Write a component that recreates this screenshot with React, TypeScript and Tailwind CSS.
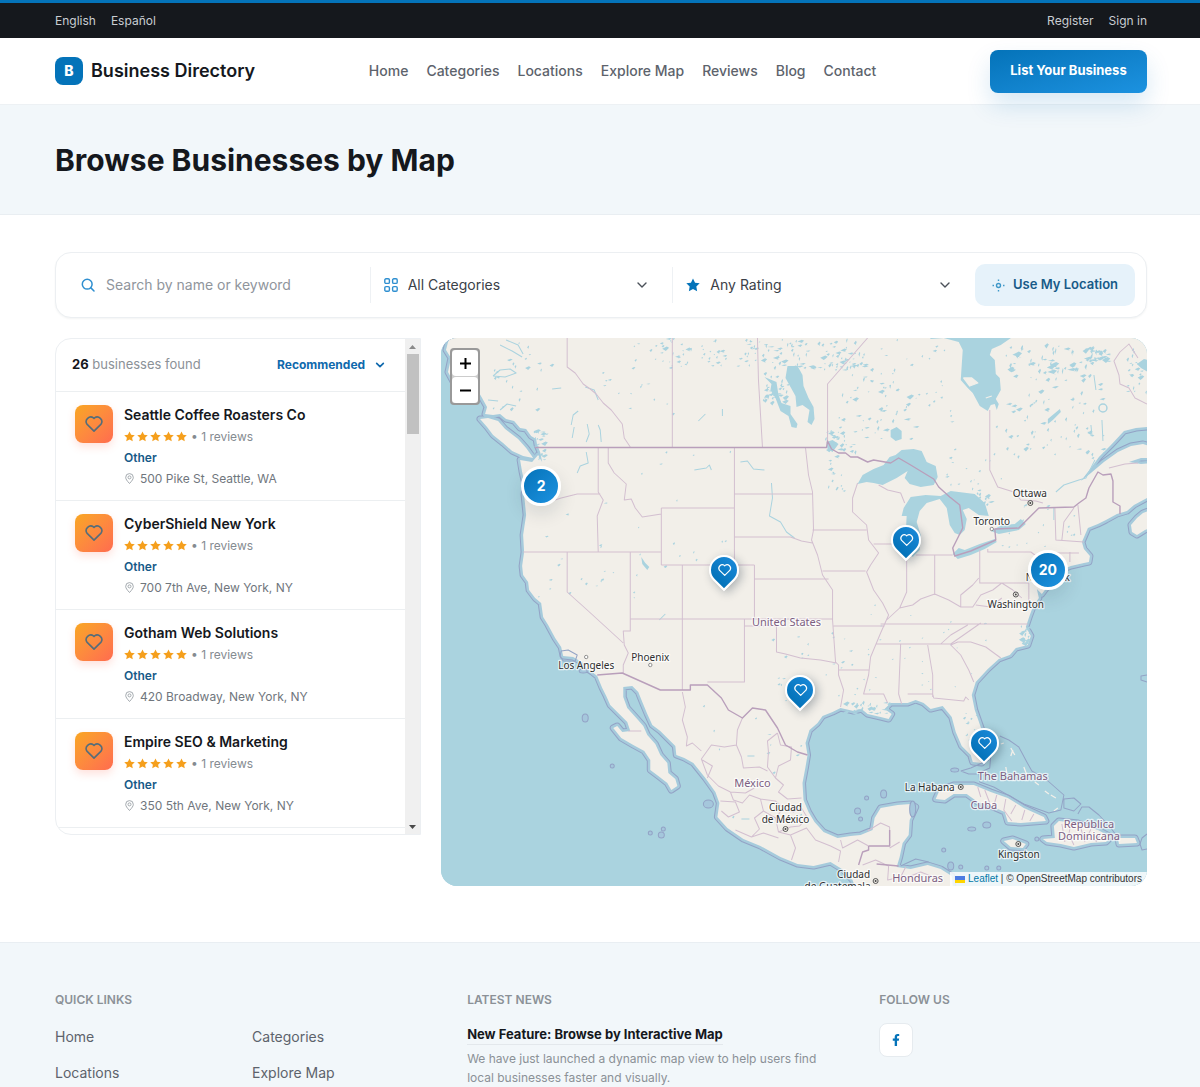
import type { ReactNode } from 'react';
import { FaFacebookF } from 'react-icons/fa';

const NAV = ['Home', 'Categories', 'Locations', 'Explore Map', 'Reviews', 'Blog', 'Contact'];

const BUSINESSES = [
  { name: 'Seattle Coffee Roasters Co', address: '500 Pike St, Seattle, WA' },
  { name: 'CyberShield New York', address: '700 7th Ave, New York, NY' },
  { name: 'Gotham Web Solutions', address: '420 Broadway, New York, NY' },
  { name: 'Empire SEO & Marketing', address: '350 5th Ave, New York, NY' },
];

// Map drawing space
const MAP = { x: 441, y: 338, w: 705, h: 548 };

const LAND =
  'M455 330 L448 342 L446 350 L451 358 L448 372 L455 385 L466 395 L478 391 L482 398 L487 407 L485 414 L493 415 L500 414 L506 419 L514 421 L520 428 L526 429 L531 436 L536 439 L537 445 L540 452 L542 462 L538 455 L532 462 L520 460 L522 472 L525 485 L524 495 L526 515 L523 535 L524 552 L522 566 L523 575 L528 582 L529 590 L535 598 L541 603 L543 617 L548 625 L555 638 L561 647 L563 656 L573 657 L583 663 L586 668 L592 672 L597 676 L602 688 L606 696 L610 705 L617 712 L627 722 L630 731 L622 732 L617 726 L613 728 L621 738 L633 745 L644 751 L650 760 L650 770 L658 776 L667 783 L671 790 L677 786 L675 779 L668 773 L667 763 L660 755 L655 744 L647 735 L643 726 L636 718 L627 708 L623 697 L623 687 L632 686 L638 692 L642 702 L647 714 L652 725 L660 731 L667 738 L675 746 L676 755 L684 758 L693 763 L705 778 L715 792 L719 803 L717 817 L727 828 L743 839 L760 846 L780 857 L797 864 L813 866 L830 862 L843 870 L852 880 L857 895 L953 895 L951 876 L940 869 L927 865 L910 869 L896 867 L899 857 L902 843 L908 835 L909 820 L915 807 L910 804 L897 805 L880 808 L874 818 L872 830 L860 835 L850 836 L837 838 L823 832 L814 822 L808 812 L803 800 L802 783 L805 767 L807 755 L805 743 L809 730 L817 723 L822 716 L832 712 L840 708 L853 711 L861 709 L867 714 L880 717 L888 719 L891 714 L884 709 L890 703 L907 703 L915 700 L923 703 L930 709 L942 706 L951 717 L955 732 L961 746 L970 755 L972 762 L981 763 L985 753 L981 730 L974 710 L971 695 L975 682 L987 669 L998 659 L1009 655 L1015 648 L1027 645 L1030 636 L1025 627 L1029 615 L1032 607 L1038 598 L1036 589 L1041 594 L1047 586 L1050 577 L1055 572 L1070 566 L1083 563 L1088 562 L1089 556 L1083 549 L1081 542 L1084 535 L1087 528 L1097 524 L1105 520 L1116 514 L1126 511 L1133 505 L1146 498 L1155 498 L1155 463 L1140 464 L1128 462 L1140 458 L1155 458 L1155 448 L1142 444 L1130 446 L1117 452 L1103 462 L1090 473 L1080 481 L1090 468 L1098 457 L1110 445 L1123 431 L1135 428 L1155 426 L1155 330 Z';

const ISLANDS = [
  'M480 419 L488 418 L498 421 L505 429 L518 439 L526 448 L531 455 L533 458 L523 456 L512 451 L503 443 L493 435 L487 427 Z',
  'M935 799 L939 790 L953 785 L973 785 L990 792 L1007 798 L1023 808 L1043 817 L1045 821 L1020 823 L1007 822 L1004 812 L990 806 L977 802 L966 794 L953 794 L944 800 Z',
  'M1042 839 L1054 838 L1053 826 L1058 821 L1077 823 L1097 830 L1110 837 L1105 842 L1090 843 L1073 847 L1060 844 L1046 842 Z',
  'M1117 838 L1134 838 L1136 843 L1118 844 Z',
  'M1003 841 L1012 839 L1025 844 L1022 848 L1010 847 Z',
  'M1130 525 L1136 518 L1142 513 L1155 508 L1155 526 L1144 530 L1136 535 L1131 532 Z',
];

const LAKES = [
  'M925 330 L930 339 L943 338 L958 342 L962 350 L961 365 L960 380 L967 388 L972 393 L979 406 L987 411 L990 405 L994 404 L996 410 L998 404 L995 399 L1000 390 L999 378 L995 374 L994 360 L989 355 L991 349 L1000 345 L1013 336 Z',
  'M857 484 L862 475 L873 469 L883 465 L889 457 L895 455 L901 450 L913 449 L921 451 L926 462 L935 466 L937 477 L933 485 L920 487 L909 484 L904 478 L907 471 L896 478 L882 485 L873 483 L866 482 Z',
  'M925 495 L910 497 L903 508 L901 516 L906 516 L905 535 L905 548 L912 557 L919 550 L920 535 L916 522 L919 511 L926 503 L939 499 L946 508 L949 525 L954 533 L959 535 L964 530 L966 519 L962 510 L968 508 L978 515 L988 516 L984 503 L974 494 L950 491 L940 496 Z',
  'M952 554 L958 548 L964 550 L979 544 L994 539 L996 542 L984 549 L970 555 L957 559 Z',
  'M990 531 L1001 525 L1014 524 L1020 519 L1025 524 L1018 530 L998 534 Z',
  'M787 366 L797 366 L802 375 L803 386 L808 398 L813 407 L814 419 L811 425 L807 422 L809 410 L802 405 L796 407 L795 396 L790 387 L785 378 Z',
  'M764 377 L776 382 L778 395 L781 403 L790 406 L790 414 L797 424 L796 428 L791 427 L788 416 L780 411 L775 398 L770 390 L771 384 Z',
  'M890 430 L896 427 L901 431 L901 439 L895 441 L890 437 Z',
  'M1047 419 L1059 409 L1060 412 L1052 420 L1047 424 Z',
  'M641 557 L645 563 L649 567 L647 570 L642 564 Z',
  'M826 442 L832 440 L838 444 L832 452 L827 449 Z',
  'M1136 364 L1143 359 L1147 360 L1147 372 L1140 368 Z',
];

const NATIONAL =
  'M535 447.500 H826 L827 441 L831 449 L838 453 L845 453 L850 457 L857 457 L867 462 L873 460 L890 463 L898 458 L910 465 L933 479 L938 487 L949 497 L959 505 L962 528 L952 548 L954 556 L970 551 L995 540 L994 529 L1018 528 L1038 508 L1073 507 L1078 503 L1085 498 L1088 488 L1097 472 L1102 475 L1110 474 L1112 481 L1112 502 L1119 506 L1119 514 M597 675 L622 673 L660 690 H690 V685 H707 L721 698 L728 710 L742 718 L752 708 L765 710 L777 728 L785 745 L797 752 L807 755 M868 846 H889 V830 M868 846 L868 850 L862 852 L858 865 M876 864 L898 866';

const STATES =
  'M567 338 V367 L575 373 L583 384 L590 389 L596 394 L603 403 L611 410 L622 424 L624 438 L630 447 M672 338 V447 M757 338 L758 380 L762 447 M867 338 L827 384 V441 M989 410 V470 L997 487 L1013 492 L1020 500 L1035 501 L1042 503 M598 448 V492 L603 500 L597 516 L598 552 M555 500 L561 498 L577 494 H600 M523 552 H661 M608 448 V463 L614 473 L626 484 L624 500 L631 499 L635 508 L642 517 L661 514 M661 508 H734 M661 508 V565 M682 565 H754 M661 565 H683 M734 448 V565 M567 552 V592 L587 610 L623 643 M630 552 V631 H623 L624 645 L628 653 L623 665 V673 M630 619 H832 M682 565 V690 M754 565 V619 M744 619 V682 H707 M744 626 H776 V652 L785 654 L800 658 L820 660 L836 663 M754 579 H828 M734 537 H790 L801 541 L812 543 M734 494 H812 M805 448 L808 475 L812 492 L813 530 L811 540 L817 555 L822 575 L832 590 V620 L835 662 L838 665 V675 L843 690 L840 707 M812 530 H866 M822 571 H865 M857 483 L852 498 L852 512 L866 525 L868 540 L878 553 L870 565 L866 572 L873 590 L882 603 L888 615 L880 633 L870 657 L868 675 L863 694 H883 L887 703 M833 626 H884 M838 670 H868 M880 624 H1027 M875 644 H950 M900 644 L898 694 L901 704 M927 645 L932 675 V697 M907 694 H932 L933 698 L963 701 L965 697 L968 700 M950 645 L960 655 L968 670 L973 682 M950 645 L957 642 L970 642 L985 647 L1000 658 M940 644 L950 635 L967 625 M873 544 H905 M906 560 V592 L899 608 M915 555 H952 M934 555 V595 M886 620 L899 608 L912 605 L920 599 L934 594 L948 600 L960 607 L960 595 L972 585 L978 578 M979 550 V583 H1028 M960 607 L972 607 L980 595 L992 590 L1001 583 L1012 590 L1021 598 M987 549 V552 H1030 L1038 558 M1028 583 V603 H1036 M1054 508 L1055 540 L1083 542 M1073 508 L1063 522 L1061 540 M1077 505 L1080 535 M1054 553 H1078 M1069 552 V562 M878 485 L887 490 L900 493 L904 503 M1137 358 L1128 344 L1119 352 L1113 361 L1118 375 L1119 384 L1128 388 L1134 398 L1146 404 M1108 468 L1124 464 L1137 463 M628 731 H641 M950 644 L980 623 M975 605 L990 607 L1001 598';

const MEXICO =
  'M682 692 L685 707 L682 720 L687 737 L686 746 L692 743 L701 751 M742 718 L737 730 L736 745 L741 757 L743 768 L759 767 L767 771 M736 745 L724 747 L711 745 L701 759 L707 775 L718 786 L730 792 L745 793 L754 788 M702 760 L712 766 L707 778 M777 733 L767 741 L768 752 L767 767 L775 778 L783 785 L778 792 L787 799 L801 798 M777 733 L780 745 L791 747 L790 760 L778 766 L775 778 M730 792 L733 800 L742 803 L749 795 L760 799 L763 811 L754 818 L759 829 L751 837 L735 830 M720 801 L735 802 L739 812 L728 817 L721 811 M760 799 L775 801 L783 808 L775 818 L763 811 M775 818 L778 832 L790 835 L795 848 L791 860 M790 835 L806 828 L815 840 L830 846 L840 851 L838 862 M783 808 L793 812 L801 808 L807 818 L799 826 L790 827 L778 832 M840 840 L842 848 L857 840 L868 846 M867 831 L880 823 L889 827 V846 M751 837 L763 833 L778 838 M889 848 L899 842 M862 865 L875 860 L888 866 L887 880 L900 877 L905 867 M905 878 L920 872 L935 878';

const ISLAND_BORDERS =
  'M977 787 L980 797 M984 790 L989 803 M996 795 L993 806 M1005 799 L1003 810 L1011 821 M1015 805 L1010 814 M1024 810 L1021 820 M1033 814 L1029 821 M1070 824 L1068 834 L1073 845 M1079 825 L1084 842 M1090 829 L1086 838 L1096 841 M1061 824 L1064 842 M1100 833 L1095 842';

const MARITIME =
  'M999 736 L1008 740 L1018 747 L1026 762 L1031 771 L1046 780 L1063 795 L1060 810 L1048 813 L1023 804 L993 787 L979 782 L978 773 L989 768 L990 755 M960 771 L970 768 L988 760 M960 771 L968 774 L976 774 M1063 799 L1073 798 L1080 804 L1073 811 L1063 808 Z M1077 814 L1081 807 L1088 807 L1098 815 L1110 828 L1115 835 M1146 834 L1141 838 L1139 844 L1141 850 L1146 849 M900 866 L915 859 L928 862 M1146 675 L1140 676 L1140 680 L1146 682 M561 651 L568 650 L577 655 L575 661 L563 661 L560 656 Z';

const ISLETS: [number, number, number, number][] = [
  [585, 718, 3, 4],
  [612, 766, 2, 2],
  [650, 833, 2, 2],
  [663, 829, 2, 2],
  [661, 835, 3, 3],
  [708, 804, 5, 4],
  [866, 798, 2, 2],
  [883, 794, 3, 4],
  [857, 811, 3, 3],
  [860, 819, 2, 2],
  [912, 809, 3, 8],
  [954, 770, 4, 2],
  [971, 829, 4, 2],
  [986, 825, 4, 3],
  [943, 850, 2, 2],
  [950, 866, 3, 4],
  [960, 867, 2, 2],
  [986, 868, 2, 2],
  [998, 868, 2, 2],
  [1036, 839, 2, 2],
  [583, 671, 4, 2],
];

const RIVERS =
  'M493 376 L500 370 L510 369 L516 373 L505 377 L493 376 M500 345 L512 351 L522 357 M506 340 L518 345 L523 354 M571 425 L573 415 L578 411 M572 438 L574 427 M586 442 L589 434 L587 424 M601 442 L600 430 L598 425 M598 400 L594 390 L585 387 M552 389 L561 388 M488 400 L498 401 M500 410 L507 404 L516 406 M586 452 L588 463 L580 466 L577 473 M694 470 L706 468 L709 465 L711 470 M740 462 L747 461 L753 469 L764 470 M771 483 L772 498 L769 516 L780 522 L786 532 L794 538 M698 421 L705 414 M722 409 V416 M1055 492 L1063 485 L1078 480 L1085 478 L1094 460 M665 614 L659 620 M1093 375 L1095 390 M1101 420 L1102 441 M747 756 H754 M741 819 H749 M1090 425 L1091 435 M1053 508 V520';

const BAHAMAS =
  'M1005 767 L1006 773 M1000 744 L1003 743 M1010 748 L1014 755 M1012 750 L1010 756 M1023 767 L1026 775 M1034 782 L1038 785 M1044 791 L1048 794 M1053 811 L1057 808 M1050 795 L1055 798 M963 378 L971 378 L977 383 L969 386 Z M985 398 L991 396';

function scatter(seed: number, count: number, x: number, y: number, w: number, h: number, size: number) {
  let s = seed;
  const next = () => {
    s = (s * 16807) % 2147483647;
    return s / 2147483647;
  };
  let d = '';
  for (let i = 0; i < count; i++) {
    const px = x + next() * w;
    const py = y + next() * h;
    const r = next();
    const a = 1 + r * r * size;
    const b = 0.5 + next() * size * 0.5;
    const lean = (next() - 0.5) * a;
    d += `M${px.toFixed(1)} ${py.toFixed(1)}l${a.toFixed(1)} ${(-b).toFixed(1)}l${(a / 2).toFixed(1)} ${(b / 2).toFixed(1)}l${(-a / 2).toFixed(1)} ${b.toFixed(1)}l${lean.toFixed(1)} ${(b / 2).toFixed(1)}z`;
  }
  return d;
}

const PONDS = [
  scatter(17017, 45, 680, 339, 75, 28, 3),
  scatter(31337, 45, 758, 340, 62, 28, 4),
  scatter(47123, 38, 762, 372, 24, 32, 4),
  scatter(59441, 45, 818, 340, 45, 30, 4),
  scatter(67891, 60, 832, 365, 88, 80, 4),
  scatter(71233, 22, 870, 340, 80, 70, 2),
  scatter(83777, 50, 1004, 345, 90, 28, 6),
  scatter(97531, 75, 1004, 375, 98, 85, 4),
  scatter(10133, 28, 1083, 346, 22, 16, 5),
  scatter(11369, 22, 1125, 350, 20, 45, 4),
  scatter(12791, 24, 600, 340, 75, 80, 2),
  scatter(13147, 14, 660, 339, 18, 30, 4),
  scatter(13901, 24, 490, 342, 60, 70, 3),
  scatter(14939, 22, 532, 430, 12, 30, 4),
  scatter(15107, 24, 824, 430, 30, 24, 4),
  scatter(16363, 14, 825, 456, 18, 38, 3),
  scatter(17321, 22, 530, 500, 110, 100, 2),
  scatter(18127, 24, 770, 630, 95, 70, 2),
  scatter(19183, 30, 860, 600, 130, 90, 1),
  scatter(19319, 22, 940, 400, 60, 90, 2),
  scatter(19937, 22, 1000, 500, 110, 50, 2),
  scatter(21121, 14, 974, 490, 14, 20, 5),
  scatter(22307, 12, 962, 705, 14, 40, 2),
  scatter(22709, 20, 1018, 625, 10, 20, 4),
  scatter(22943, 30, 832, 702, 60, 12, 4),
  scatter(23327, 16, 700, 700, 100, 130, 2),
  scatter(23911, 14, 620, 450, 110, 120, 2),
].join('');

type Place = { lines: string[]; x: number; y: number; country?: boolean };

const PLACES: Place[] = [
  { lines: ['Ottawa'], x: 1029, y: 497 },
  { lines: ['Toronto'], x: 991, y: 525 },
  { lines: ['Washington'], x: 1015, y: 608 },
  { lines: ['New York'], x: 1047, y: 581 },
  { lines: ['Los Angeles'], x: 586, y: 669 },
  { lines: ['Phoenix'], x: 650, y: 661 },
  { lines: ['La Habana'], x: 929, y: 791 },
  { lines: ['Kingston'], x: 1018, y: 858 },
  { lines: ['Ciudad', 'de México'], x: 785, y: 811 },
  { lines: ['Ciudad'], x: 853, y: 878 },
  { lines: ['de Guatemala'], x: 837, y: 890 },
  { lines: ['United States'], x: 786, y: 626, country: true },
  { lines: ['México'], x: 752, y: 787, country: true },
  { lines: ['The Bahamas'], x: 1012, y: 780, country: true },
  { lines: ['Cuba'], x: 983, y: 809, country: true },
  { lines: ['República', 'Dominicana'], x: 1088, y: 828, country: true },
  { lines: ['Honduras'], x: 917, y: 882, country: true },
];

const CAPITALS = [
  [1029.5, 503],
  [1015, 594.5],
  [960, 787],
  [1017.5, 844],
  [785, 829],
  [875, 881],
];

const TOWNS = [
  [586, 657],
  [650, 665],
  [991, 529],
];

function MapDrawing() {
  const coast = [LAND, ...ISLANDS].join(' ');
  return (
    <svg
      className="absolute inset-0 h-full w-full"
      viewBox={`${MAP.x} ${MAP.y} ${MAP.w} ${MAP.h}`}
      preserveAspectRatio="none"
      role="img"
      aria-label="Map of North America"
    >
      <rect x={MAP.x} y={MAP.y} width={MAP.w} height={MAP.h} fill="#aad3df" />
      <g strokeLinejoin="round" fill="none">
        <path d={coast} stroke="#93a3c6" strokeWidth="7" />
        <path d={coast} stroke="#a6cbdc" strokeWidth="5" />
        <path d={coast} fill="#f2efe9" />
        <path d={LAKES.join(' ')} fill="#aad3df" />
        <path d={PONDS} fill="#aad3df" />
        <path d={RIVERS} stroke="#aad3df" strokeWidth="1" />
        <path d={BAHAMAS} fill="#f2efe9" stroke="#f2efe9" strokeWidth="1.3" />
        <path d={MARITIME} stroke="#93a3c6" strokeWidth="1" />
        <circle cx="1102" cy="408" r="4" stroke="#aad3df" strokeWidth="1.5" />
        {ISLETS.map(([x, y, rx, ry]) => (
          <ellipse key={`${x}-${y}`} cx={x} cy={y} rx={rx} ry={ry} stroke="#93a3c6" strokeWidth="1" fill="#a5c7dc" />
        ))}
        <path d={STATES} stroke="#d3bfd0" strokeWidth="1" />
        <path d={MEXICO} stroke="#d3bfd0" strokeWidth="1" />
        <path d={ISLAND_BORDERS} stroke="#d3bfd0" strokeWidth="1" />
        <path d={NATIONAL} stroke="#b99fbb" strokeWidth="1.4" />
      </g>
      {CAPITALS.map(([x, y]) => (
        <g key={`${x}-${y}`}>
          <circle cx={x} cy={y} r="2.5" fill="#f2efe9" stroke="#444" strokeWidth="0.9" />
          <circle cx={x} cy={y} r="1" fill="#444" />
        </g>
      ))}
      {TOWNS.map(([x, y]) => (
        <circle key={x} cx={x} cy={y} r="1.7" fill="#fff" stroke="#777" strokeWidth="0.8" />
      ))}
      <g
        fontFamily='"Noto Sans", sans-serif'
        textAnchor="middle"
        stroke="#fff"
        strokeOpacity="0.7"
        strokeWidth="2.5"
        strokeLinejoin="round"
        paintOrder="stroke"
      >
        {PLACES.map((p) => (
          <text key={`${p.lines[0]}${p.y}`} y={p.y} fontSize={p.country ? 11 : 10} fill={p.country ? '#7d5f82' : '#2f2f2f'}>
            {p.lines.map((line, i) => (
              <tspan key={line} x={p.x} dy={i * 12}>
                {line}
              </tspan>
            ))}
          </text>
        ))}
      </g>
    </svg>
  );
}

function HeartIcon({ className }: { className: string }) {
  return (
    <svg className={className} viewBox="0 0 24 24" fill="none" stroke="currentColor" strokeWidth="1.9" strokeLinejoin="round" aria-hidden="true">
      <path d="M12 20.500 L3.500 12.200 A5.600 5.600 0 0 1 11.400 4.600 L12 5.200 L12.600 4.600 A5.600 5.600 0 0 1 20.500 12.200 Z" />
    </svg>
  );
}

function StarIcon({ className }: { className: string }) {
  return (
    <svg className={className} viewBox="0 0 24 24" fill="currentColor" aria-hidden="true">
      <path d="M12 1 L15.500 8 L23.500 9.100 L17.700 14.600 L19.100 22.500 L12 18.800 L4.900 22.500 L6.300 14.600 L0.500 9.100 L8.500 8 Z" />
    </svg>
  );
}

function ChevronIcon({ className }: { className: string }) {
  return (
    <svg className={className} viewBox="0 0 12 12" fill="none" stroke="currentColor" strokeLinecap="round" strokeLinejoin="round" aria-hidden="true">
      <path d="M2 4 L6 8 L10 4" />
    </svg>
  );
}

function GridIcon() {
  return (
    <svg className="size-[14px] shrink-0 text-[#2f8fd0]" viewBox="0 0 14 14" fill="none" stroke="currentColor" strokeWidth="1.4" aria-hidden="true">
      <rect x="0.8" y="0.8" width="4.6" height="4.6" rx="1.2" />
      <rect x="8.6" y="0.8" width="4.6" height="4.6" rx="1.2" />
      <rect x="0.8" y="8.6" width="4.6" height="4.6" rx="1.2" />
      <rect x="8.6" y="8.6" width="4.6" height="4.6" rx="1.2" />
    </svg>
  );
}

function FilterSelect({ icon, label, options }: { icon: ReactNode; label: string; options: string[] }) {
  return (
    <label className="relative flex h-9 min-w-0 flex-1 items-center gap-[10px] border-l border-[#eef1f4] pl-[13px]">
      {icon}
      <select aria-label={label} className="min-w-0 flex-1 appearance-none bg-transparent text-sm text-[#3b4148] outline-none">
        {options.map((o) => (
          <option key={o}>{o}</option>
        ))}
      </select>
      <ChevronIcon className="pointer-events-none absolute right-6 size-3 stroke-[1.4] text-[#4b5159]" />
    </label>
  );
}

function Cluster({ x, y, count }: { x: number; y: number; count: number }) {
  return (
    <button
      type="button"
      aria-label={`${count} businesses`}
      className="absolute flex size-10 -translate-x-1/2 -translate-y-1/2 items-center justify-center rounded-full border-[3px] border-white bg-linear-to-br from-[#0473b9] to-[#1c92e0] text-sm font-bold text-white shadow-[0_8px_18px_rgba(20,40,60,0.12)]"
      style={{ left: `${((x - MAP.x) / MAP.w) * 100}%`, top: `${((y - MAP.y) / MAP.h) * 100}%` }}
    >
      {count}
    </button>
  );
}

function Pin({ x, y }: { x: number; y: number }) {
  return (
    <button
      type="button"
      aria-label="Business"
      className="absolute flex size-[30px] -translate-x-1/2 -translate-y-1/2 -rotate-45 items-center justify-center rounded-full rounded-bl-none border-2 border-white bg-linear-to-r from-[#0473b9] to-[#1787d6] text-white shadow-[0_4px_10px_rgba(20,40,60,0.3)]"
      style={{ left: `${((x - MAP.x) / MAP.w) * 100}%`, top: `${((y - MAP.y) / MAP.h) * 100}%` }}
    >
      <HeartIcon className="size-[15px] rotate-45" />
    </button>
  );
}

function TopBar() {
  return (
    <div className="border-t-[3px] border-[#0473b9] bg-[#15181d]">
      <div className="mx-auto flex h-[35px] max-w-[1140px] items-center justify-between pr-[23px] pl-[25px] text-xs text-[#c9cdd2]">
        <div className="flex gap-[15px]">
          <a href="#en">English</a>
          <a href="#es">Español</a>
        </div>
        <div className="flex gap-[15px]">
          <a href="#register">Register</a>
          <a href="#signin">Sign in</a>
        </div>
      </div>
    </div>
  );
}

function Header() {
  return (
    <header className="relative border-b border-[#edf1f4] bg-white">
      <div className="mx-auto flex h-[66px] max-w-[1140px] items-center justify-between pr-[23px] pl-[25px]">
        <a href="#home" className="flex items-center gap-2 text-lg font-semibold text-[#15181d]">
          <span className="flex size-7 items-center justify-center rounded-lg bg-[#0473b9] text-sm font-extrabold text-white">B</span>
          Business Directory
        </a>
        <nav className="flex gap-[18px] text-sm font-medium text-[#5d636c]">
          {NAV.map((item) => (
            <a key={item} href={`#${item.toLowerCase().replace(' ', '-')}`}>
              {item}
            </a>
          ))}
        </nav>
        <button
          type="button"
          className="h-[43px] w-[157px] rounded-lg bg-linear-to-br from-[#0473b9] to-[#1c92e0] text-[13px] font-bold text-white shadow-[0_12px_24px_rgba(4,115,185,0.16)]"
        >
          List Your Business
        </button>
      </div>
    </header>
  );
}

function SearchBar() {
  return (
    <form className="flex h-[66px] items-center rounded-2xl border border-[#eceff2] bg-white px-[11px] shadow-[0_1px_2px_rgba(20,30,40,0.05)]">
      <label className="flex h-9 min-w-0 flex-1 items-center gap-[11px] pl-[14px]">
        <svg className="size-[14px] shrink-0 text-[#2f8fd0]" viewBox="0 0 14 14" fill="none" stroke="currentColor" strokeWidth="1.5" strokeLinecap="round" aria-hidden="true">
          <circle cx="6.200" cy="6.200" r="4.900" />
          <path d="M9.900 9.900 L13 13" />
        </svg>
        <input
          type="search"
          aria-label="Search by name or keyword"
          placeholder="Search by name or keyword"
          className="min-w-0 flex-1 bg-transparent text-sm text-[#3b4148] outline-none placeholder:text-[#8f959c]"
        />
      </label>
      <FilterSelect icon={<GridIcon />} label="Category" options={['All Categories', 'Other']} />
      <FilterSelect icon={<StarIcon className="size-[14px] shrink-0 text-[#0473b9]" />} label="Rating" options={['Any Rating', '5 stars']} />
      <button type="button" className="flex h-[42px] w-40 items-center justify-center gap-2 rounded-[10px] bg-[#e6f2fa] text-[13px] font-semibold text-[#175a88]">
        <svg className="size-[13px] text-[#4099c9]" viewBox="0 0 13 13" fill="none" stroke="currentColor" strokeWidth="1.4" aria-hidden="true">
          <circle cx="6.5" cy="6.5" r="2" />
          <path d="M6.500 0.500 V2 M6.500 11 V12.500 M0.500 6.500 H2 M11 6.500 H12.500" />
        </svg>
        Use My Location
      </button>
    </form>
  );
}

function BusinessItem({ name, address }: { name: string; address: string }) {
  return (
    <li className="flex gap-[11px] border-b border-[#eceff1] pt-3 pr-4 pb-[11px] pl-[19px]">
      <span className="mt-px flex size-[38px] shrink-0 items-center justify-center rounded-lg bg-linear-to-br from-[#f9a61f] to-[#ff6b4e] shadow-[0_4px_8px_rgba(255,107,78,0.2)]">
        <HeartIcon className="size-5 text-[#556d7a]" />
      </span>
      <div className="min-w-0">
        <h3 className="text-sm leading-[22px] font-semibold text-[#15181d]">
          <a href="#business">{name}</a>
        </h3>
        <p className="flex h-[21px] items-center text-xs text-[#858b91]">
          <span className="flex gap-[2px] text-[#f59f1c]" role="img" aria-label="5 out of 5 stars">
            {[0, 1, 2, 3, 4].map((n) => (
              <StarIcon key={n} className="size-[11px]" />
            ))}
          </span>
          <span className="ml-1">• 1 reviews</span>
        </p>
        <p className="text-xs leading-[21px] font-semibold text-[#175a88]">Other</p>
        <p className="flex h-[21px] items-center gap-[5px] text-xs text-[#70767d]">
          <svg className="size-[11px] text-[#9aa0a6]" viewBox="0 0 11 11" fill="none" stroke="currentColor" strokeWidth="0.9" aria-hidden="true">
            <path d="M5.500 10.500 C3 7.800 1.700 6.100 1.700 4.400 A3.800 3.800 0 0 1 9.300 4.400 C9.300 6.100 8 7.800 5.500 10.500 Z" />
            <circle cx="5.5" cy="4.4" r="1.5" />
          </svg>
          {address}
        </p>
      </div>
    </li>
  );
}

function Results() {
  return (
    <section className="flex h-[497px] overflow-hidden rounded-l-2xl border border-[#eceff2] bg-white">
      <div className="min-w-0 flex-1 overflow-hidden">
        <div className="flex h-[53px] items-center justify-between border-b border-[#eceff1] pr-5 pl-4">
          <p className="text-[13px] text-[#8b9197]">
            <strong className="font-bold text-[#15181d]">26</strong> businesses found
          </p>
          <label className="relative flex items-center">
            <select aria-label="Sort by" className="w-27 appearance-none bg-transparent text-xs font-bold text-[#0f69ad] outline-none">
              <option>Recommended</option>
              <option>Top rated</option>
            </select>
            <ChevronIcon className="pointer-events-none absolute right-0 size-[10px] stroke-2 text-[#0f69ad]" />
          </label>
        </div>
        <ul>
          {BUSINESSES.map((b) => (
            <BusinessItem key={b.name} {...b} />
          ))}
        </ul>
      </div>
      <div className="flex w-[15px] shrink-0 flex-col items-center bg-[#f0f0f0]" aria-hidden="true">
        <div className="flex h-[15px] items-center">
          <svg className="h-1 w-[7px]" viewBox="0 0 7 4">
            <path d="M0 4 L3.500 0 L7 4 Z" fill="#8a8a8a" />
          </svg>
        </div>
        <div className="h-20 w-3 bg-[#c1c1c1]" />
        <div className="mt-auto flex h-[15px] items-center">
          <svg className="h-1 w-[7px]" viewBox="0 0 7 4">
            <path d="M0 0 L3.500 4 L7 0 Z" fill="#4a4a4a" />
          </svg>
        </div>
      </div>
    </section>
  );
}

function MapPanel() {
  return (
    <section className="relative h-[548px] overflow-hidden rounded-2xl bg-[#aad3df]">
      <MapDrawing />
      <div className="absolute top-[10px] left-[9px] flex flex-col gap-px rounded border-2 border-black/25 bg-[#ccc]">
        <button type="button" aria-label="Zoom in" className="flex size-[26px] items-center justify-center rounded-sm bg-white text-black">
          <svg className="size-[11px]" viewBox="0 0 11 11" stroke="currentColor" strokeWidth="2">
            <path d="M5.500 0 V11 M0 5.500 H11" />
          </svg>
        </button>
        <button type="button" aria-label="Zoom out" className="flex size-[26px] items-center justify-center rounded-sm bg-white text-black">
          <svg className="size-[11px]" viewBox="0 0 11 11" stroke="currentColor" strokeWidth="2">
            <path d="M0 5.500 H11" />
          </svg>
        </button>
      </div>
      <Cluster x={541} y={486} count={2} />
      <Cluster x={1047} y={570} count={20} />
      <Pin x={724} y={570} />
      <Pin x={905} y={540} />
      <Pin x={799} y={690} />
      <Pin x={983} y={743} />
      <div className="absolute right-0 bottom-0 flex h-[14px] items-center gap-[3px] bg-white/80 px-[5px] font-['Liberation_Sans',sans-serif] text-[10px] leading-none text-[#333]">
        <svg className="h-[7px] w-[10px]" viewBox="0 0 10 7" aria-hidden="true">
          <path d="M0 0 H10 V4 H0 Z" fill="#4c7be1" />
          <path d="M0 4 H10 V7 H0 Z" fill="#ffd500" />
        </svg>
        <span>
          <a href="#leaflet" className="text-[#0078a8]">
            Leaflet
          </a>{' '}
          | © OpenStreetMap contributors
        </span>
      </div>
    </section>
  );
}

function Footer() {
  return (
    <footer className="border-t border-[#e9eef2] bg-[#f2f7fa]">
      <div className="mx-auto grid max-w-[1140px] grid-cols-[1.36fr_1.36fr_1fr] gap-12 pt-12 pr-[23px] pl-[25px]">
        <section>
          <h2 className="text-xs leading-[18px] font-semibold text-[#8b9197]">QUICK LINKS</h2>
          <ul className="mt-[17px] grid grid-cols-2 gap-x-[30px] gap-y-[15px] text-sm leading-[21px] text-[#5d636c]">
            {['Home', 'Categories', 'Locations', 'Explore Map'].map((l) => (
              <li key={l}>
                <a href={`#${l.toLowerCase().replace(' ', '-')}`}>{l}</a>
              </li>
            ))}
          </ul>
        </section>
        <section>
          <h2 className="text-xs leading-[18px] font-semibold text-[#8b9197]">LATEST NEWS</h2>
          <a href="#news" className="mt-[15px] inline-block border-b border-[#e3e8ec] text-[13px] leading-5 font-bold text-[#15181d]">
            New Feature: Browse by Interactive Map
          </a>
          <p className="mt-1 text-xs leading-[19px] text-[#8b9197]">
            We have just launched a dynamic map view to help users find local businesses faster and visually.
          </p>
        </section>
        <section>
          <h2 className="text-xs leading-[18px] font-semibold text-[#8b9197]">FOLLOW US</h2>
          <a href="#facebook" aria-label="Facebook" className="mt-[14px] flex size-[34px] items-center justify-center rounded-lg border border-[#e6ebef] bg-white text-[#0473b9]">
            <FaFacebookF className="size-3" />
          </a>
        </section>
      </div>
    </footer>
  );
}

export default function App() {
  return (
    <div className="bg-white font-['Inter',sans-serif]">
      <TopBar />
      <Header />
      <div className="border-b border-[#e9eef2] bg-[#f2f7fa]">
        <div className="mx-auto flex h-[109px] max-w-[1140px] items-center pr-[23px] pl-[25px]">
          <h1 className="text-3xl font-bold text-[#15181d]">Browse Businesses by Map</h1>
        </div>
      </div>
      <main className="mx-auto max-w-[1140px] pt-[37px] pr-[23px] pb-14 pl-[25px]">
        <SearchBar />
        <div className="mt-5 grid grid-cols-[366px_minmax(0,1fr)] items-start gap-5">
          <Results />
          <MapPanel />
        </div>
      </main>
      <Footer />
    </div>
  );
}
